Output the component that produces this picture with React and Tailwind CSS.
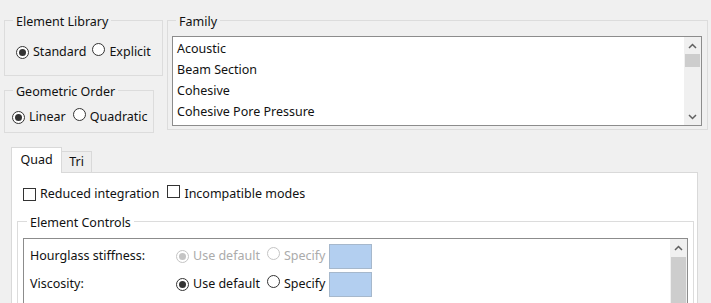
import React from "react";

function Radio({ checked, disabled }) {
  return (
    <span
      className={`inline-flex items-center justify-center w-[13px] h-[13px] rounded-full border bg-white shrink-0 ${
        disabled ? "border-[#c4c4c4]" : "border-[#333333]"
      }`}
    >
      {checked && (
        <span
          className={`block w-[7px] h-[7px] rounded-full ${
            disabled ? "bg-[#c4c4c4]" : "bg-[#333333]"
          }`}
        />
      )}
    </span>
  );
}

function Check() {
  return <span className="inline-block w-[13px] h-[13px] border border-[#333333] bg-white shrink-0" />;
}

function Chevron({ up }) {
  return (
    <svg width="9" height="6" viewBox="0 0 9 6" className="block">
      <path
        d={up ? "M1 5 L4.5 1.5 L8 5" : "M1 1 L4.5 4.5 L8 1"}
        fill="none"
        stroke="#606060"
        strokeWidth="1.5"
      />
    </svg>
  );
}

function Group({ title, className, legendClass = "ml-[8px]", children }) {
  return (
    <fieldset className={`border border-[#dcdcdc] min-w-0 ${className}`}>
      <legend className={`${legendClass} px-[3px] pt-[3px] leading-[14px]`}>{title}</legend>
      {children}
    </fieldset>
  );
}

export default function App() {
  const families = ["Acoustic", "Beam Section", "Cohesive", "Cohesive Pore Pressure"];
  return (
    <div className="w-[711px] h-[303px] overflow-hidden bg-[#f0f0f0] text-[12.5px] text-[#111111] font-['Noto_Sans',sans-serif]">
      <div className="flex items-start">
        <div className="flex flex-col ml-[4px]">
          <Group title="Element Library" className="mt-[12px] w-[159px] h-[64px]">
            <div className="flex items-center h-[20px] mt-[13px] ml-[11px]">
              <Radio checked />
              <span className="ml-[4px]">Standard</span>
              <span className="ml-[6px]"><Radio /></span>
              <span className="ml-[4px]">Explicit</span>
            </div>
          </Group>
          <Group title="Geometric Order" className="mt-[6px] w-[150px] h-[51px]">
            <div className="flex items-center h-[20px] mt-[8px] ml-[7px]">
              <Radio checked />
              <span className="ml-[4px]">Linear</span>
              <span className="ml-[7px]"><Radio /></span>
              <span className="ml-[4px]">Quadratic</span>
            </div>
          </Group>
        </div>
        <Group title="Family" className="mt-[12px] ml-[4px] w-[541px] h-[118px]">
          <div className="mt-[7px] ml-[4px] mr-[5px] h-[90px] border border-[#8c8c8c] bg-white flex">
            <div className="flex-1 flex flex-col pt-[2px]">
              {families.map((f) => (
                <div key={f} className="h-[21px] flex items-center pl-[4px]">
                  {f}
                </div>
              ))}
            </div>
            <div className="w-[17px] bg-[#f0f0f0] flex flex-col items-center">
              <div className="h-[17px] flex items-center justify-center"><Chevron up /></div>
              <div className="w-[15px] h-[13px] bg-[#cdcdcd]" />
              <div className="flex-1" />
              <div className="h-[17px] flex items-center justify-center"><Chevron /></div>
            </div>
          </div>
        </Group>
      </div>

      <div className="ml-[11px] mt-[14px] w-[687px]">
        <div className="flex items-end h-[26px] relative z-10">
          <div className="w-[51px] h-[26px] bg-white border border-b-0 border-[#d9d9d9] flex items-center justify-center">
            Quad
          </div>
          <div className="w-[30px] h-[21px] bg-[#eeeeee] border border-l-0 border-b-0 border-[#d9d9d9] flex items-center justify-center mb-[1px]">
            Tri
          </div>
        </div>
        <div className="-mt-[1px] border border-[#d9d9d9] bg-white h-[140px] px-[11px]">
          <div className="flex items-center h-[20px] mt-[11px]">
            <Check />
            <span className="ml-[4px]">Reduced integration</span>
            <span className="ml-[8px]"><Check /></span>
            <span className="ml-[4px]">Incompatible modes</span>
          </div>
          <Group title="Element Controls" className="mt-[9px] -ml-[6px] w-[677px] h-[120px]" legendClass="ml-[9px]">
            <div className="mt-[8px] ml-[5px] mr-[5px] h-[100px] border border-[#8c8c8c] bg-white flex">
              <div className="flex-1 flex flex-col pt-[3px]">
                <div className="h-[28px] flex items-center pl-[6px]">
                  <span className="w-[146px]">Hourglass stiffness:</span>
                  <Radio checked disabled />
                  <span className="ml-[4px] text-[#ababab]">Use default</span>
                  <span className="ml-[7px]"><Radio disabled /></span>
                  <span className="ml-[4px] text-[#ababab]">Specify</span>
                  <span className="ml-[4px] w-[43px] h-[25px] bg-[#b3cff0] border border-[#a6b8cc]" />
                </div>
                <div className="h-[28px] flex items-center pl-[6px]">
                  <span className="w-[146px]">Viscosity:</span>
                  <Radio checked />
                  <span className="ml-[4px]">Use default</span>
                  <span className="ml-[7px]"><Radio /></span>
                  <span className="ml-[4px]">Specify</span>
                  <span className="ml-[4px] w-[43px] h-[25px] bg-[#b3cff0] border border-[#a6b8cc]" />
                </div>
              </div>
              <div className="w-[17px] bg-[#f0f0f0] flex flex-col items-center">
                <div className="h-[18px] flex items-center justify-center"><Chevron up /></div>
                <div className="w-[15px] flex-1 bg-[#cdcdcd]" />
              </div>
            </div>
          </Group>
        </div>
      </div>
    </div>
  );
}
